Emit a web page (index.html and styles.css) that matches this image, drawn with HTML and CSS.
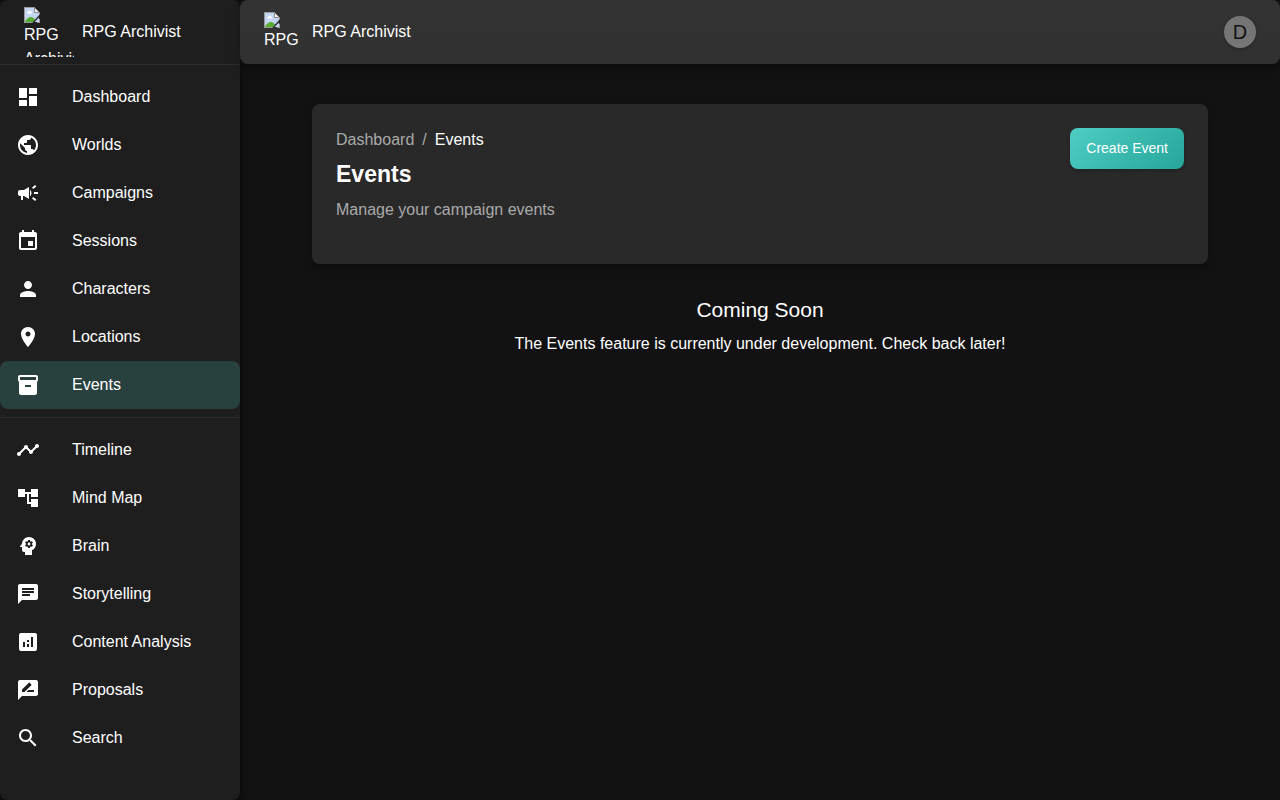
FILE: index.html
```html
<!DOCTYPE html>
<html lang="en">
<head>
<meta charset="utf-8">
<title>RPG Archivist</title>
<link rel="stylesheet" href="styles.css">
</head>
<body>
<svg class="sprite" aria-hidden="true">
  <symbol id="missing-image" viewBox="0 0 16 16">
    <path fill="#c4d6f4" d="M1 1h9l5 5v9H1z"/>
    <path fill="#fff" d="M3 6c0-1 1-1.500 1.600-1.300C5 3.500 7 3.600 7.200 4.900 8 5 8.300 6 7.800 6.500H3.300z"/>
    <path fill="#56ad32" d="M1 15c1-3 4-5.500 6.500-5 2 .5 3 2 4 3l-2 2z"/>
    <path fill="#9a9a9a" d="M0 0h11v1H1v14h8v1H0zM15 5h1v3h-1zM13 15h3v1h-3zM15 12h1v4h-1z"/>
    <path fill="#f4f4f4" stroke="#8a8a8a" d="M10.500.5l5 5h-5z"/>
    <path fill="#2b2b2b" d="M16 7v2.500L10.500 15 8 16z"/>
  </symbol>
</svg>
<div class="app">
  <aside class="sidebar">
    <div class="brand brand-side">
      <span class="logo logo-large"><svg class="missing"><use href="#missing-image"/></svg>RPG Archivist</span>
      <span>RPG Archivist</span>
    </div>
    <nav>
      <ul class="nav-list">
        <li><a href="#"><svg viewBox="0 0 24 24"><path d="M3 13h8V3H3v10zm0 8h8v-6H3v6zm10 0h8V11h-8v10zm0-18v6h8V3h-8z"/></svg>Dashboard</a></li>
        <li><a href="#"><svg viewBox="0 0 24 24"><path d="M12 2C6.480 2 2 6.480 2 12s4.480 10 10 10 10-4.480 10-10S17.520 2 12 2zm-1 17.930c-3.950-.49-7-3.850-7-7.930 0-.62.080-1.210.21-1.790L9 15v1c0 1.100.9 2 2 2v1.930zm6.900-2.540c-.26-.81-1-1.390-1.900-1.390h-1v-3c0-.55-.45-1-1-1H8v-2h2c.55 0 1-.45 1-1V7h2c1.100 0 2-.9 2-2v-.41c2.930 1.190 5 4.060 5 7.410 0 2.080-.8 3.970-2.100 5.390z"/></svg>Worlds</a></li>
        <li><a href="#"><svg viewBox="0 0 24 24"><path d="M18 11v2h4v-2h-4zm-2 6.610c.96.710 2.210 1.650 3.200 2.390.4-.53.8-1.070 1.200-1.600-.99-.74-2.240-1.680-3.200-2.400-.4.540-.8 1.080-1.200 1.610zM20.400 5.600c-.4-.53-.8-1.070-1.200-1.600-.99.740-2.240 1.680-3.200 2.400.4.530.8 1.070 1.200 1.600.96-.72 2.210-1.650 3.200-2.400zM4 9c-1.100 0-2 .9-2 2v2c0 1.100.9 2 2 2h1v4h2v-4h1l5 3V6L8 9H4zm11.500 3c0-1.330-.58-2.530-1.500-3.350v6.690c.92-.81 1.500-2.010 1.500-3.340z"/></svg>Campaigns</a></li>
        <li><a href="#"><svg viewBox="0 0 24 24"><path d="M17 12h-5v5h5v-5zM16 1v2H8V1H6v2H5c-1.110 0-1.990.9-1.990 2L3 19c0 1.100.89 2 2 2h14c1.100 0 2-.9 2-2V5c0-1.100-.9-2-2-2h-1V1h-2zm3 18H5V8h14v11z"/></svg>Sessions</a></li>
        <li><a href="#"><svg viewBox="0 0 24 24"><path d="M12 12c2.210 0 4-1.790 4-4s-1.790-4-4-4-4 1.790-4 4 1.790 4 4 4zm0 2c-2.670 0-8 1.340-8 4v2h16v-2c0-2.660-5.330-4-8-4z"/></svg>Characters</a></li>
        <li><a href="#"><svg viewBox="0 0 24 24"><path d="M12 2C8.130 2 5 5.130 5 9c0 5.250 7 13 7 13s7-7.750 7-13c0-3.870-3.130-7-7-7zm0 9.500c-1.380 0-2.500-1.120-2.500-2.500s1.120-2.500 2.500-2.500 2.500 1.120 2.500 2.500-1.120 2.500-2.500 2.500z"/></svg>Locations</a></li>
        <li><a href="#" class="active" aria-current="page"><svg viewBox="0 0 24 24"><path d="M20 2H4c-1 0-2 .9-2 2v3.010c0 .72.430 1.340 1 1.690V20c0 1.100 1.100 2 2 2h14c.9 0 2-.9 2-2V8.700c.57-.35 1-.97 1-1.690V4c0-1.100-1-2-2-2zm-5 12H9v-2h6v2zm5-7H4V4h16v3z"/></svg>Events</a></li>
      </ul>
      <ul class="nav-list">
        <li><a href="#"><svg viewBox="0 0 24 24"><path d="M23 8c0 1.100-.9 2-2 2-.18 0-.35-.02-.51-.07l-3.560 3.550c.05.160.070.340.070.520 0 1.100-.9 2-2 2s-2-.9-2-2c0-.18.020-.36.070-.52l-2.550-2.550c-.16.050-.34.070-.52.070s-.36-.02-.52-.07l-4.550 4.560c.05.160.070.330.070.510 0 1.100-.9 2-2 2s-2-.9-2-2 .9-2 2-2c.18 0 .35.020.51.070l4.560-4.550C8.020 9.360 8 9.180 8 9c0-1.100.9-2 2-2s2 .9 2 2c0 .18-.02.360-.07.520l2.550 2.550c.16-.05.340-.07.520-.07s.36.020.52.070l3.550-3.560C19.020 8.350 19 8.180 19 8c0-1.100.9-2 2-2s2 .9 2 2z"/></svg>Timeline</a></li>
        <li><a href="#"><svg viewBox="0 0 24 24"><path d="M22 11V3h-7v3H9V3H2v8h7V8h2v10h4v3h7v-8h-7v3h-2V8h2v3z"/></svg>Mind Map</a></li>
        <li><a href="#"><svg viewBox="0 0 24 24"><path d="M13 8.570c-.79 0-1.430.64-1.430 1.430s.64 1.430 1.430 1.430 1.430-.64 1.430-1.430-.64-1.430-1.430-1.430z"/><path d="M13 3C9.250 3 6.200 5.940 6.020 9.640L4.100 12.200c-.25.330-.01.800.4.800H6v3c0 1.100.9 2 2 2h1v3h7v-4.680c2.360-1.120 4-3.530 4-6.320 0-3.870-3.130-7-7-7zm3 7c0 .13-.01.260-.02.390l.83.660c.08.060.1.160.05.250l-.8 1.390c-.05.090-.16.120-.24.090l-.99-.4c-.21.160-.43.290-.67.390L14 13.830c-.01.100-.1.170-.2.170h-1.600c-.1 0-.18-.07-.2-.17l-.15-1.060c-.25-.1-.47-.23-.68-.39l-.99.4c-.09.030-.2 0-.25-.09l-.8-1.390c-.05-.08-.03-.19.050-.25l.84-.66c-.01-.13-.02-.26-.02-.39s.02-.27.040-.39l-.85-.66c-.08-.06-.1-.16-.05-.26l.8-1.380c.05-.09.150-.12.240-.09l1 .4c.2-.15.430-.29.670-.39L12 6.170c.02-.1.100-.17.200-.17h1.600c.1 0 .18.070.2.170l.15 1.060c.24.100.46.230.67.390l1-.4c.09-.03.200 0 .24.090l.8 1.380c.05.090.030.200-.05.260l-.85.660c.03.120.040.250.040.390z"/></svg>Brain</a></li>
        <li><a href="#"><svg viewBox="0 0 24 24"><path d="M20 2H4c-1.100 0-1.990.9-1.990 2L2 22l4-4h14c1.100 0 2-.9 2-2V4c0-1.100-.9-2-2-2zM6 9h12v2H6V9zm8 5H6v-2h8v2zm4-6H6V6h12v2z"/></svg>Storytelling</a></li>
        <li><a href="#"><svg viewBox="0 0 24 24"><path d="M19 3H5c-1.100 0-2 .9-2 2v14c0 1.100.9 2 2 2h14c1.100 0 2-.9 2-2V5c0-1.100-.9-2-2-2zM9 17H7v-5h2v5zm4 0h-2v-3h2v3zm0-5h-2v-2h2v2zm4 5h-2V7h2v10z"/></svg>Content Analysis</a></li>
        <li><a href="#"><svg viewBox="0 0 24 24"><path d="M20 2H4c-1.100 0-1.990.9-1.990 2L2 22l4-4h14c1.100 0 2-.9 2-2V4c0-1.100-.9-2-2-2zM6 14v-2.470l6.880-6.880c.2-.2.510-.2.710 0l1.770 1.770c.2.200.2.510 0 .71L8.470 14H6zm12 0h-7.500l2-2H18v2z"/></svg>Proposals</a></li>
        <li><a href="#"><svg viewBox="0 0 24 24"><path d="M15.500 14h-.79l-.28-.27C15.410 12.590 16 11.110 16 9.500 16 5.910 13.090 3 9.500 3S3 5.910 3 9.500 5.910 16 9.500 16c1.610 0 3.090-.59 4.230-1.570l.27.280v.79l5 4.990L20.490 19l-4.990-5zm-6 0C7.010 14 5 11.990 5 9.500S7.010 5 9.500 5 14 7.010 14 9.500 11.990 14 9.500 14z"/></svg>Search</a></li>
      </ul>
    </nav>
  </aside>
  <div class="page">
    <header class="topbar">
      <div class="brand">
        <span class="logo"><svg class="missing"><use href="#missing-image"/></svg>RPG</span>
        <span>RPG Archivist</span>
      </div>
      <button class="avatar" type="button" aria-label="Account">D</button>
    </header>
    <main class="content">
      <section class="hero">
        <div>
          <nav class="crumbs"><a href="#">Dashboard</a><span>/</span><span class="current">Events</span></nav>
          <h1>Events</h1>
          <p>Manage your campaign events</p>
        </div>
        <button class="create" type="button">Create Event</button>
      </section>
      <section class="soon">
        <h2>Coming Soon</h2>
        <p>The Events feature is currently under development. Check back later!</p>
      </section>
    </main>
  </div>
</div>
</body>
</html>
```
FILE: styles.css
```css
* { box-sizing: border-box; }
body {
  margin: 0;
  background: #121212;
  color: #fff;
  font: 16px/24px "Liberation Sans", Arial, sans-serif;
}
h1, h2, p, ul { margin: 0; padding: 0; }
a { color: inherit; text-decoration: none; }
button { border: 0; font-family: inherit; cursor: pointer; }
.sprite { display: none; }
.app { display: flex; min-height: 100vh; }

.sidebar {
  flex: 0 0 240px;
  background: #1e1e1e;
  border-radius: 8px;
  box-shadow: 0 4px 8px rgba(0, 0, 0, .5);
}
.brand { display: flex; align-items: center; height: 64px; gap: 8px; }
.brand-side { padding-left: 24px; }
.logo { width: 40px; height: 40px; overflow: hidden; }
.logo-large { width: 50px; height: 50px; }
.missing { display: block; width: 16px; height: 16px; }
.nav-list { list-style: none; padding: 8px 0; border-top: 1px solid #2d2d2d; }
.nav-list a {
  display: flex;
  align-items: center;
  gap: 32px;
  height: 48px;
  padding: 0 16px;
  border-radius: 8px;
}
.nav-list svg { width: 24px; height: 24px; fill: #fff; }
.nav-list .active { background: #29413e; }

.page { flex: 1; min-width: 0; }
.topbar {
  display: flex;
  align-items: center;
  justify-content: space-between;
  height: 64px;
  padding: 0 24px;
  background: linear-gradient(#333, #313131);
  border-radius: 8px;
  box-shadow: 0 4px 8px rgba(0, 0, 0, .3);
}
.avatar {
  width: 32px;
  height: 32px;
  padding: 0;
  border-radius: 50%;
  background: #757575;
  color: #121212;
  font-size: 20px;
  box-shadow: 0 2px 4px rgba(0, 0, 0, .2);
}
.content { padding: 40px 72px; }
.hero {
  display: flex;
  justify-content: space-between;
  align-items: flex-start;
  min-height: 160px;
  padding: 24px;
  background: #292929;
  border-radius: 8px;
  box-shadow: 0 4px 8px rgba(0, 0, 0, .25);
}
.crumbs { display: flex; gap: 8px; color: #aaa; }
.crumbs .current { color: #fff; }
.hero h1 { margin: 8px 0; font-size: 23px; line-height: 28px; }
.hero p { color: #aaa; line-height: 28px; }
.create {
  padding: 8px 16px;
  color: #fff;
  font-size: 14px;
  line-height: 25px;
  background: linear-gradient(135deg, #4ecdc4, #26a69a);
  border-radius: 8px;
  box-shadow: 0 2px 4px rgba(0, 0, 0, .2);
}
.soon { padding-top: 32px; text-align: center; }
.soon h2 { font-size: 21px; font-weight: 400; line-height: 28px; margin-bottom: 8px; }
```
